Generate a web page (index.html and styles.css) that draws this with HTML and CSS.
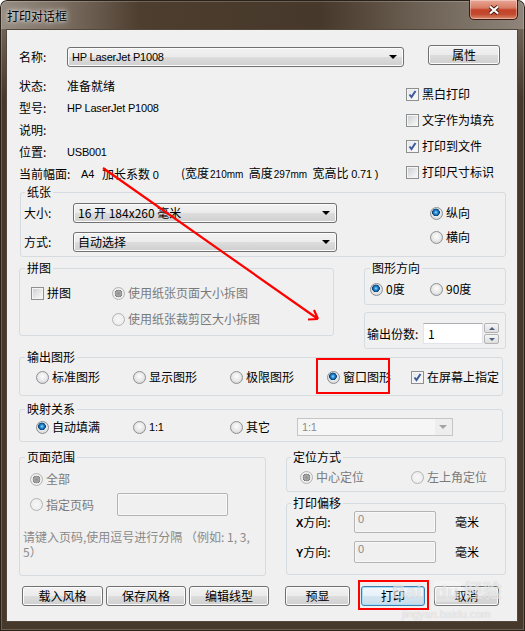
FILE: index.html
```html
<!DOCTYPE html>
<html lang="zh-CN">
<head>
    <meta charset="UTF-8">
    <meta name="viewport" content="width=device-width, initial-scale=1.0">
    <title>打印对话框</title>
    <link rel="stylesheet" href="styles.css">
</head>
<body>
<div class="window">
    <div class="titlebar">
        <span class="title">打印对话框</span>
        <span class="close-btn">
            <svg width="12" height="10" viewBox="0 0 12 10"><path d="M2 1.5 L10 8.5 M10 1.5 L2 8.5" stroke="#4a1a10" stroke-width="4" fill="none"/><path d="M2 1.5 L10 8.5 M10 1.5 L2 8.5" stroke="#fff" stroke-width="2.2" fill="none"/></svg>
        </span>
    </div>

    <div class="client">
        <!-- printer info -->
        <div class="top">
            <div class="info">
                <div class="row row-name">
                    <span class="lbl">名称:</span>
                    <div class="combo combo-printer"><span class="latin">HP LaserJet P1008</span><i class="arrow"></i></div>
                </div>
                <div class="row"><span class="lbl">状态:</span><span>准备就绪</span></div>
                <div class="row"><span class="lbl">型号:</span><span class="latin">HP LaserJet P1008</span></div>
                <div class="row"><span class="lbl">说明:</span></div>
                <div class="row"><span class="lbl">位置:</span><span class="latin">USB001</span></div>
                <div class="row">
                    <span class="lbl-wide">当前幅面:</span>
                    <span class="a4 latin">A4</span>
                    <span class="factor">加长系数 <span class="latin">0</span></span>
                    <span class="dims">(宽度<small>210mm</small>&nbsp; 高度<small>297mm</small>&nbsp; 宽高比 <span class="latin">0.71 )</span></span>
                </div>
            </div>
            <div class="side">
                <button class="btn btn-prop">属性</button>
                <label class="opt"><span class="check on"><svg width="11" height="11" viewBox="0 0 11 11"><path d="M2.5 5.5 L4.5 8 L8.5 2" stroke="#3d5a9a" stroke-width="2" fill="none"/></svg></span>黑白打印</label>
                <label class="opt"><span class="check"></span>文字作为填充</label>
                <label class="opt"><span class="check on"><svg width="11" height="11" viewBox="0 0 11 11"><path d="M2.5 5.5 L4.5 8 L8.5 2" stroke="#3d5a9a" stroke-width="2" fill="none"/></svg></span>打印到文件</label>
                <label class="opt"><span class="check"></span>打印尺寸标识</label>
            </div>
        </div>

        <!-- paper -->
        <fieldset class="grp grp-paper">
            <legend>纸张</legend>
            <div class="paper-body">
                <div class="paper-fields">
                    <div class="field">
                        <span class="flbl">大小:</span>
                        <div class="combo combo-size"><span>16 开 184x260 毫米</span><i class="arrow"></i></div>
                    </div>
                    <div class="field">
                        <span class="flbl">方式:</span>
                        <div class="combo combo-size"><span>自动选择</span><i class="arrow"></i></div>
                    </div>
                </div>
                <div class="paper-orient">
                    <label class="opt"><span class="radio on"></span>纵向</label>
                    <label class="opt"><span class="radio"></span>横向</label>
                </div>
            </div>
        </fieldset>

        <div class="mid">
            <fieldset class="grp grp-tile">
                <legend>拼图</legend>
                <div class="tile-body">
                    <label class="opt"><span class="check"></span>拼图</label>
                    <label class="opt dis"><span class="radio on"></span>使用纸张页面大小拆图</label>
                    <span></span>
                    <label class="opt dis"><span class="radio"></span>使用纸张裁剪区大小拆图</label>
                </div>
            </fieldset>
            <div class="mid-right">
                <fieldset class="grp grp-rot">
                    <legend>图形方向</legend>
                    <div class="rot-body">
                        <label class="opt w60"><span class="radio on"></span>0度</label>
                        <label class="opt"><span class="radio"></span>90度</label>
                    </div>
                </fieldset>
                <div class="copies">
                    <span class="copies-lbl">输出份数:</span>
                    <span class="txt">1</span>
                    <span class="spin"><span><i class="up"></i></span><span><i class="down"></i></span></span>
                </div>
            </div>
        </div>

        <fieldset class="grp grp-out">
            <legend>输出图形</legend>
            <div class="choice-row">
                <label class="opt w97"><span class="radio"></span>标准图形</label>
                <label class="opt w97"><span class="radio"></span>显示图形</label>
                <label class="opt w97"><span class="radio"></span>极限图形</label>
                <label class="opt w84"><span class="radio on"></span>窗口图形</label>
                <label class="opt"><span class="check on"><svg width="11" height="11" viewBox="0 0 11 11"><path d="M2.5 5.5 L4.5 8 L8.5 2" stroke="#3d5a9a" stroke-width="2" fill="none"/></svg></span>在屏幕上指定</label>
            </div>
        </fieldset>

        <fieldset class="grp grp-map">
            <legend>映射关系</legend>
            <div class="choice-row">
                <label class="opt w97"><span class="radio on"></span>自动填满</label>
                <label class="opt w97"><span class="radio"></span><span class="latin">1:1</span></label>
                <label class="opt w67"><span class="radio"></span>其它</label>
                <div class="combo-dis"><span class="latin">1:1</span><i class="arrow"></i></div>
            </div>
        </fieldset>

        <div class="lower">
            <fieldset class="grp grp-range">
                <legend>页面范围</legend>
                <div class="range-body">
                    <label class="opt dis"><span class="radio on"></span>全部</label>
                    <div class="page-row">
                        <label class="opt dis w87"><span class="radio"></span>指定页码</label>
                        <span class="txt-dis txt-page"></span>
                    </div>
                    <p class="hint">请键入页码,使用逗号进行分隔 （例如: 1, 3,<br>5）</p>
                </div>
            </fieldset>
            <div class="lower-right">
                <fieldset class="grp grp-pos">
                    <legend>定位方式</legend>
                    <div class="pos-body">
                        <label class="opt dis w111"><span class="radio on"></span>中心定位</label>
                        <label class="opt dis"><span class="radio"></span>左上角定位</label>
                    </div>
                </fieldset>
                <fieldset class="grp grp-offset">
                    <legend>打印偏移</legend>
                    <div class="off-body">
                        <div class="off-row">
                            <span class="off-lbl"><b class="latin">X</b>方向:</span>
                            <span class="txt-dis">0</span>
                            <span class="unit">毫米</span>
                        </div>
                        <div class="off-row">
                            <span class="off-lbl"><b class="latin">Y</b>方向:</span>
                            <span class="txt-dis">0</span>
                            <span class="unit">毫米</span>
                        </div>
                    </div>
                </fieldset>
            </div>
        </div>

        <div class="actions">
            <button class="btn w81">载入风格</button>
            <button class="btn w80 gap3">保存风格</button>
            <button class="btn w80 gap3">编辑线型</button>
            <button class="btn w65 gap16">预显</button>
            <button class="btn btn-default w64 gap11">打印</button>
            <button class="btn w65 gap9">取消</button>
        </div>
    </div>

    <!-- annotations drawn over the dialog -->
    <svg class="annot-arrow" width="525" height="631" viewBox="0 0 525 631">
        <path d="M103 168 L318 319 M318 319 L308 319.5 M318 319 L314 310" stroke="#ff0000" stroke-width="2.2" fill="none"/>
    </svg>
    <div class="mark mark-window"></div>
    <div class="mark mark-print"></div>
    <div class="watermark">
        <span class="wm-logo">Bai<span class="wm-du">du</span>经验</span>
        <span class="wm-url">jingyan.baidu.com</span>
    </div>
</div>
</body>
</html>
```

FILE: styles.css
```css
* {
    box-sizing: border-box;
}
body {
    margin: 0;
    background: #ffffff;
    font-family: "Noto Sans CJK SC", "Liberation Sans", sans-serif;
    font-size: 12px;
    line-height: 14px;
    color: #000;
}
.window {
    position: relative;
    width: 525px;
    height: 631px;
    padding: 0 7px 9px 6px;
    border-radius: 7px 7px 0 0;
    background:
        linear-gradient(90deg, #978d82 0, #7d7064 60px, #4d3e2f 140px, #46382a 320px, #6d6155 420px, #8f857a 525px) 0 0 / 100% 29px no-repeat,
        linear-gradient(#6e6256 0, #46382a 70px) 0 29px / 100% 100% no-repeat,
        #46382a;
    box-shadow: inset 0 0 0 1px #2a2118, inset 0 0 0 2px rgba(255, 255, 255, 0.2);
}

/* title bar */
.titlebar {
    display: flex;
    height: 29px;
}
.title {
    margin: 9px 0 0 1px;
    text-shadow: 0 0 6px #fff, 0 0 3px rgba(255, 255, 255, 0.8);
}
.close-btn {
    margin-left: auto;
    width: 49px;
    height: 20px;
    display: flex;
    align-items: center;
    justify-content: center;
    border: 1px solid #3b1a12;
    border-top: none;
    border-radius: 0 0 5px 5px;
    background: linear-gradient(#e9a795 0, #d77c65 42%, #c4432a 52%, #c24a2e 75%, #dc8a6b 100%);
    box-shadow: inset 0 0 0 1px rgba(255, 255, 255, 0.35);
}

/* client area */
.client {
    height: 593px;
    border: 1px solid #54483c;
    background: #f0f0f0;
    padding: 0 11px 0 12px;
}
.latin {
    font-family: "Liberation Sans", sans-serif;
    font-size: 11px;
    letter-spacing: -0.2px;
}

.top {
    display: flex;
    height: 155px;
}
.info {
    width: 387px;
}
.row {
    display: flex;
    align-items: center;
    height: 22px;
    white-space: nowrap;
}
.row-name {
    height: 20px;
    margin: 17px 0 8px;
}
.lbl {
    width: 48px;
}
.lbl-wide {
    width: 62px;
}
.a4 {
    width: 21px;
}
.factor {
    width: 79px;
}
.dims small {
    font-family: "Liberation Sans", sans-serif;
    font-size: 10px;
    margin-left: 1px;
}
.side {
    display: flex;
    flex-direction: column;
    align-items: flex-start;
}
.btn-prop {
    width: 72px;
    margin: 15px 0 16px 22px;
}
.side .opt {
    height: 26px;
}

/* controls */
.opt {
    display: flex;
    align-items: center;
    gap: 3px;
    height: 20px;
    white-space: nowrap;
}
.opt.dis {
    color: #7a7a7a;
}
.check {
    flex: none;
    width: 13px;
    height: 13px;
    border: 1px solid #8e8f8f;
    background: linear-gradient(135deg, #c9ccd1 0, #eeeeee 70%, #f7f7f7 100%);
    box-shadow: inset 0 0 0 1px #f4f4f4;
}
.check.on {
    background: linear-gradient(135deg, #e4e6ea 0, #fbfbfb 100%);
}
.check svg {
    display: block;
}
.radio {
    flex: none;
    width: 13px;
    height: 13px;
    border-radius: 50%;
    border: 1px solid #8c8f93;
    background: radial-gradient(circle at 50% 40%, #fdfdfd 0, #e6e6e6 55%, #c9cbcd 100%);
}
.radio.on {
    background:
        radial-gradient(circle at 45% 40%, #9edbff 0, #2e8fd6 1.6px, #0b5a9a 3px, #0a3f70 3.6px, transparent 4.1px),
        radial-gradient(circle at 50% 40%, #fdfdfd 0, #e6e6e6 55%, #c9cbcd 100%);
}
.dis .radio {
    border-color: #b3b3b3;
    background: radial-gradient(circle, #f7f7f7 0, #e9e9e9 100%);
}
.dis .radio.on {
    background:
        radial-gradient(circle, #8d8d8d 0, #a9a9a9 2.5px, #7d7d7d 3.6px, transparent 4.1px),
        radial-gradient(circle, #f7f7f7 0, #e9e9e9 100%);
}
.btn {
    height: 20px;
    padding: 0;
    border: 1px solid #707070;
    border-radius: 3px;
    background: linear-gradient(#f2f2f2 0, #ebebeb 50%, #dddddd 50%, #cfcfcf 100%);
    box-shadow: inset 0 0 0 1px #fcfcfc;
    font: inherit;
    color: #000;
}
.btn-default {
    border-color: #3c7fb1;
    box-shadow: inset 0 0 0 1px #a8dcf8;
    background: linear-gradient(#f2f8fc 0, #e6f1f8 50%, #d5e6f1 50%, #c8dbe8 100%);
}
.combo {
    display: flex;
    align-items: center;
    height: 20px;
    padding-left: 4px;
    border: 1px solid #707070;
    border-radius: 3px;
    background: linear-gradient(#f2f2f2 0, #ebebeb 50%, #dddddd 50%, #cfcfcf 100%);
    box-shadow: inset 0 0 0 1px #fcfcfc;
    white-space: nowrap;
}
.arrow {
    margin-left: auto;
    margin-right: 6px;
    width: 0;
    height: 0;
    border-left: 4px solid transparent;
    border-right: 4px solid transparent;
    border-top: 4px solid #000;
}
.combo-printer {
    width: 337px;
}
.combo-size {
    width: 264px;
}
.combo-dis {
    display: flex;
    align-items: center;
    width: 156px;
    height: 18px;
    padding-left: 4px;
    border: 1px solid #c5c5c5;
    background: linear-gradient(90deg, #f6f6f6 0, #f6f6f6 137px, #eeeeee 137px);
    color: #8d8d8d;
}
.combo-dis .arrow {
    border-top-color: #a3a3a3;
    margin-right: 5px;
}
.txt {
    width: 60px;
    height: 21px;
    padding-left: 4px;
    line-height: 19px;
    border: 1px solid #e2e3ea;
    border-top-color: #abadb3;
    background: #fff;
}
.txt-dis {
    width: 82px;
    height: 22px;
    padding: 1px 3px;
    border: 1px solid #b4b4b4;
    border-radius: 2px;
    box-shadow: inset 0 0 0 1px #f8f8f8;
    color: #8a8a8a;
    font-family: "Liberation Sans", sans-serif;
    font-size: 11px;
    line-height: 12px;
}
.spin {
    display: flex;
    flex-direction: column;
    gap: 1px;
    width: 15px;
    height: 21px;
    margin-left: 1px;
}
.spin > span {
    flex: 1;
    display: flex;
    align-items: center;
    justify-content: center;
    border: 1px solid #b2b2b2;
    border-radius: 2px;
    background: linear-gradient(#f6f6f6, #dedede);
}
.spin i {
    width: 0;
    height: 0;
    border-left: 3px solid transparent;
    border-right: 3px solid transparent;
}
.spin .up {
    border-bottom: 3px solid #4d5f84;
}
.spin .down {
    border-top: 3px solid #4d5f84;
}

/* group boxes */
.grp {
    margin: 0;
    padding: 0;
    min-width: 0;
    border: 1px solid #d5dbdf;
    border-radius: 3px;
}
.grp legend {
    margin-left: 5px;
    padding: 0 2px;
    line-height: 14px;
}
.grp-paper {
    height: 72px;
    margin-left: 1px;
}
.grp-paper legend {
    margin-left: 4px;
}
.paper-body {
    display: flex;
    padding: 4px 0 0 3px;
}
.paper-fields {
    display: flex;
    flex-direction: column;
    gap: 9px;
}
.field {
    display: flex;
    align-items: center;
    height: 20px;
}
.flbl {
    width: 49px;
}
.paper-orient {
    margin: -2px 0 0 auto;
    width: 75px;
}
.paper-orient .opt {
    height: 24px;
}

.mid {
    display: flex;
    align-items: flex-start;
    gap: 30px;
    margin-top: 4px;
}
.grp-tile {
    width: 315px;
    height: 75px;
}
.tile-body {
    display: grid;
    grid-template-columns: 81px auto;
    row-gap: 6px;
    padding: 8px 0 0 11px;
}
.mid-right {
    width: 142px;
}
.grp-rot {
    height: 44px;
}
.rot-body {
    display: flex;
    padding: 4px 0 0 5px;
}
.copies {
    display: flex;
    align-items: center;
    height: 37px;
    margin-top: 7px;
    padding: 10px 0 4px 2px;
    border: 1px solid #d5dbdf;
    border-radius: 3px;
}
.copies-lbl {
    width: 56px;
}

.grp-out {
    height: 46px;
    margin: 1px 3px 0 0;
}
.grp-map {
    height: 40px;
    margin: 6px 3px 0 0;
}
.choice-row {
    display: flex;
    align-items: center;
    padding: 3px 0 0 16px;
}
.grp-map .choice-row {
    padding-top: 1px;
}
.w60 { width: 60px; }
.w67 { width: 67px; }
.w84 { width: 84px; }
.w87 { width: 87px; }
.w97 { width: 97px; }
.w111 { width: 111px; }

.lower {
    display: flex;
    align-items: flex-start;
    gap: 20px;
    margin-top: 8px;
}
.grp-range {
    width: 247px;
    height: 126px;
}
.range-body {
    padding: 5px 0 0 10px;
}
.page-row {
    display: flex;
    align-items: center;
    height: 23px;
    margin-top: 4px;
}
.txt-page {
    width: 111px;
    height: 23px;
}
.hint {
    margin: 13px 0 0 -7px;
    line-height: 15px;
    color: #8a8a8a;
    white-space: nowrap;
}
.lower-right {
    width: 220px;
}
.grp-pos {
    height: 42px;
}
.grp-pos legend,
.grp-offset legend {
    margin-left: 4px;
}
.pos-body {
    display: flex;
    padding: 3px 0 0 13px;
}
.grp-offset {
    height: 79px;
    margin-top: 4px;
}
.off-body {
    display: flex;
    flex-direction: column;
    gap: 8px;
    padding: 1px 0 0 9px;
}
.off-row {
    display: flex;
    align-items: center;
    height: 22px;
}
.off-lbl {
    width: 58px;
}
.off-lbl b {
    font-weight: bold;
}
.unit {
    margin-left: 19px;
}

/* bottom buttons */
.actions {
    display: flex;
    margin-top: 10px;
    padding-left: 3px;
}
.w64 { width: 64px; }
.w65 { width: 65px; }
.w80 { width: 80px; }
.w81 { width: 81px; }
.gap3 { margin-left: 3px; }
.gap9 { margin-left: 9px; }
.gap11 { margin-left: 11px; }
.gap16 { margin-left: 16px; }

/* red annotations */
.annot-arrow {
    position: absolute;
    left: 0;
    top: 0;
    pointer-events: none;
}
.mark {
    position: absolute;
    border: 2px solid #ff0000;
}
.mark-window {
    left: 316px;
    top: 358px;
    width: 74px;
    height: 36px;
}
.mark-print {
    left: 358px;
    top: 580px;
    width: 71px;
    height: 30px;
}
.watermark {
    position: absolute;
    left: 392px;
    top: 581px;
    display: flex;
    flex-direction: column;
    align-items: flex-start;
    pointer-events: none;
    font-family: "Liberation Sans", "Noto Sans CJK SC", sans-serif;
    color: rgba(255, 255, 255, 0.6);
    text-shadow: 0 0 1px rgba(0, 0, 0, 0.2);
}
.wm-logo {
    font-size: 19px;
    line-height: 22px;
    font-weight: bold;
}
.wm-du {
    margin: 0 3px 0 12px;
    padding: 0 2px;
    border-radius: 3px;
    background: rgba(255, 255, 255, 0.3);
}
.wm-url {
    margin: 5px 0 0 10px;
    font-size: 11px;
    line-height: 12px;
}
```
